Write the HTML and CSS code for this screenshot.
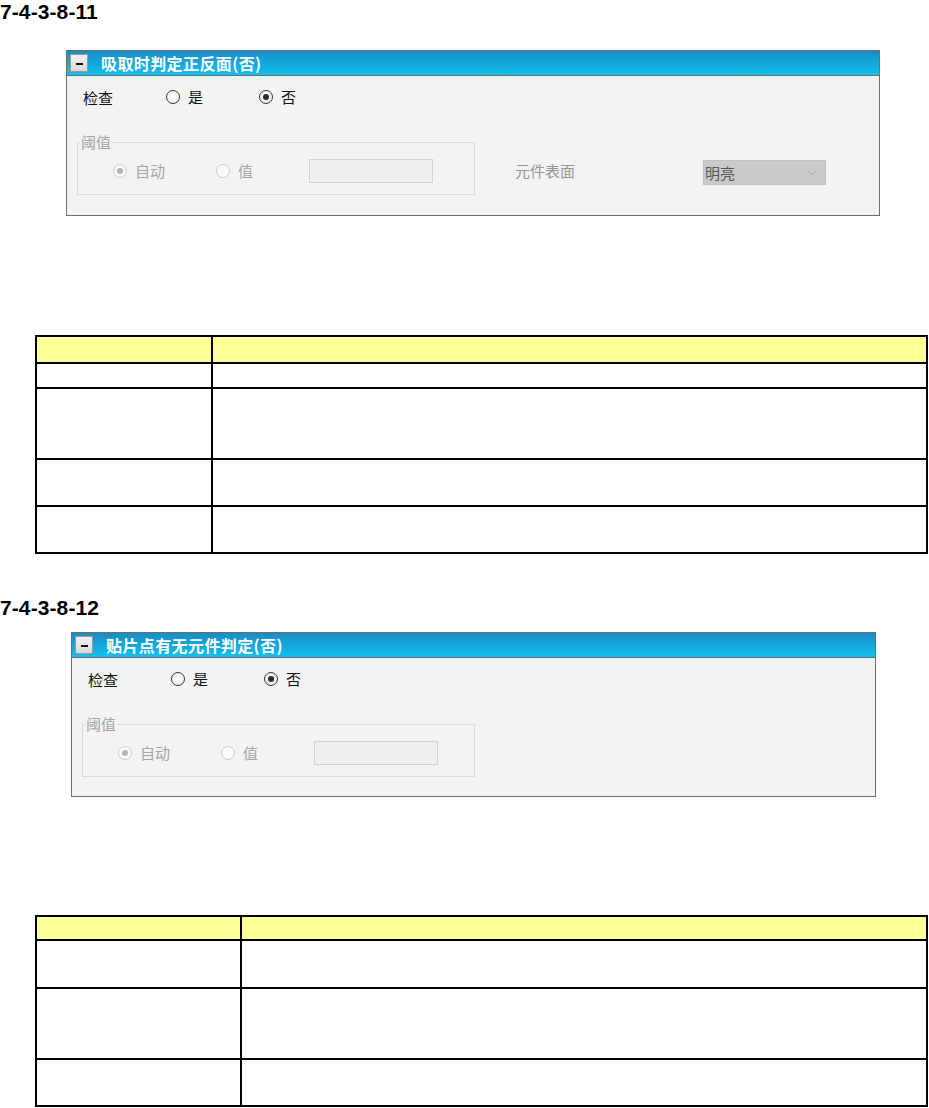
FILE: index.html
```html
<!DOCTYPE html>
<html lang="zh-CN">
<head>
<meta charset="utf-8">
<title>7-4-3-8</title>
<link rel="stylesheet" href="styles.css">
</head>
<body>
<h2 class="sec-title">7-4-3-8-11</h2>

<div class="panel panel-a">
  <div class="panel-head">
    <span class="collapse-btn"><span class="minus"></span></span>
    <span class="panel-title">吸取时判定正反面(否)</span>
  </div>
  <div class="panel-body">
    <div class="check-row">
      <span class="check-label">检查</span>
      <label class="radio"><span class="circle"></span>是</label>
      <label class="radio"><span class="circle checked"></span>否</label>
    </div>
    <div class="threshold-row">
      <fieldset class="group">
        <legend class="group-legend">阈值</legend>
        <div class="group-row">
          <label class="radio radio-auto disabled"><span class="circle checked"></span>自动</label>
          <label class="radio radio-val disabled"><span class="circle"></span>值</label>
          <span class="textbox"></span>
        </div>
      </fieldset>
      <div class="surface">
        <span class="surface-label">元件表面</span>
        <div class="select"><span>明亮</span>
          <svg class="chev" width="10" height="6" viewBox="0 0 10 6"><path d="M0.5 0.5 L5 5 L9.5 0.5" fill="none" stroke="#a9a9a9" stroke-width="1"/></svg>
        </div>
      </div>
    </div>
  </div>
</div>

<table class="spec spec-a">
  <tr class="h27"><th class="c1"></th><th></th></tr>
  <tr class="h25"><td></td><td></td></tr>
  <tr class="h71"><td></td><td></td></tr>
  <tr class="h47"><td></td><td></td></tr>
  <tr class="h47"><td></td><td></td></tr>
</table>

<h2 class="sec-title sec-title-b">7-4-3-8-12</h2>

<div class="panel panel-b">
  <div class="panel-head">
    <span class="collapse-btn"><span class="minus"></span></span>
    <span class="panel-title">贴片点有无元件判定(否)</span>
  </div>
  <div class="panel-body">
    <div class="check-row">
      <span class="check-label">检查</span>
      <label class="radio"><span class="circle"></span>是</label>
      <label class="radio"><span class="circle checked"></span>否</label>
    </div>
    <div class="threshold-row">
      <fieldset class="group group-b">
        <legend class="group-legend">阈值</legend>
        <div class="group-row">
          <label class="radio radio-auto disabled"><span class="circle checked"></span>自动</label>
          <label class="radio radio-val disabled"><span class="circle"></span>值</label>
          <span class="textbox"></span>
        </div>
      </fieldset>
    </div>
  </div>
</div>

<table class="spec spec-b">
  <tr class="h24"><th class="c1"></th><th></th></tr>
  <tr class="h48"><td></td><td></td></tr>
  <tr class="h71"><td></td><td></td></tr>
  <tr class="h47"><td></td><td></td></tr>
</table>
</body>
</html>
```

FILE: styles.css
```css
html, body {
  margin: 0;
  padding: 0;
  background: #ffffff;
}

body {
  font-family: "Liberation Sans", Arial, sans-serif;
  color: #000;
}

.sec-title {
  margin: 0;
  font: bold 21px/24px "Liberation Sans", Arial, sans-serif;
  letter-spacing: 0.1px;
}

.sec-title-b {
  margin-top: 42px;
}

/* ---------- panel ---------- */
.panel {
  box-sizing: border-box;
  border: 1px solid #6e6e6e;
  background: #f3f3f3;
  font-family: "Noto Sans CJK SC", "Microsoft YaHei", sans-serif;
  font-size: 15px;
}

.panel-a {
  margin: 26px 0 0 66px;
  width: 814px;
  height: 166px;
}

.panel-b {
  margin: 12px 0 0 71px;
  width: 805px;
  height: 165px;
}

.panel-head {
  height: 24px;
  border-bottom: 1px solid #6e6e6e;
  background: linear-gradient(#1a8cc4, #0fc2ee);
  display: flex;
  align-items: center;
  padding-left: 3px;
}

.collapse-btn {
  box-sizing: border-box;
  width: 18px;
  height: 18px;
  border: 1px solid #9a9a9a;
  background: linear-gradient(#f2f2f2, #d8d8d8);
  display: flex;
  align-items: center;
  justify-content: center;
}

.minus {
  width: 7px;
  height: 2px;
  background: #111;
  margin-top: 2px;
}

.panel-title {
  margin-left: 13px;
  color: #ffffff;
  font-weight: bold;
  font-size: 16px;
  line-height: 20px;
  letter-spacing: 0.4px;
}

.panel-body {
  padding: 11px 0 0 10px;
}

.check-row {
  display: flex;
  align-items: center;
  height: 20px;
  padding-left: 6px;
  color: #111;
}

.check-label {
  width: 83px;
}

.radio {
  display: flex;
  align-items: center;
  width: 93px;
  gap: 8px;
  line-height: 20px;
}

.circle {
  box-sizing: border-box;
  width: 14px;
  height: 14px;
  border-radius: 50%;
  border: 1px solid #333;
  background: radial-gradient(circle at 50% 40%, #ffffff 0, #f4f4f4 60%, #e6e6e6 100%);
  display: flex;
  align-items: center;
  justify-content: center;
  flex: none;
}

.circle.checked::after {
  content: "";
  width: 6px;
  height: 6px;
  border-radius: 50%;
  background: #2a2a2a;
}

.radio.disabled {
  color: #a6a6a6;
}

.radio.disabled .circle {
  border-color: #cbcbcb;
  background: #fafafa;
}

.radio.disabled .circle.checked::after {
  background: #b4b4b4;
}

.threshold-row {
  display: flex;
  margin-top: 27px;
}

.group {
  box-sizing: border-box;
  width: 398px;
  margin: 0;
  padding: 9px 0 11px 0;
  border: 1px solid #dadada;
  min-width: 0;
}

.group-b {
  width: 393px;
}

.group-legend {
  margin-left: 2px;
  padding: 0 1px;
  color: #a4a4a4;
  font-size: 15px;
  line-height: 16px;
}

.group-row {
  display: flex;
  align-items: center;
  height: 24px;
  padding-left: 35px;
}

.radio-auto {
  width: 103px;
}

.radio-val {
  width: 93px;
}

.textbox {
  box-sizing: border-box;
  width: 124px;
  height: 24px;
  border: 1px solid #d2d2d2;
  background: #efefef;
}

.surface {
  display: flex;
  align-items: center;
  padding-top: 12px;
  margin-left: 40px;
}

.surface-label {
  width: 188px;
  color: #959595;
}

.select {
  box-sizing: border-box;
  width: 123px;
  height: 25px;
  border: 1px solid #c2c2c2;
  background: #cacaca;
  color: #555;
  display: flex;
  align-items: center;
  justify-content: space-between;
  padding: 0 8px 0 1px;
  margin-top: 3px;
}

.chev {
  display: block;
  margin-top: 2px;
}

/* ---------- tables ---------- */
.spec {
  border-collapse: collapse;
  margin-left: 35px;
  width: 893px;
  table-layout: fixed;
}

.spec-a {
  margin-top: 119px;
}

.spec-b {
  margin-top: 118px;
}

.spec th,
.spec td {
  border: 2px solid #000;
  padding: 0;
}

.spec th {
  background: #ffff99;
}

.spec-a .c1 {
  width: 174px;
}

.spec-b .c1 {
  width: 203px;
}

.h24 { height: 24px; }
.h25 { height: 25px; }
.h27 { height: 27px; }
.h47 { height: 47px; }
.h48 { height: 48px; }
.h71 { height: 71px; }
```
